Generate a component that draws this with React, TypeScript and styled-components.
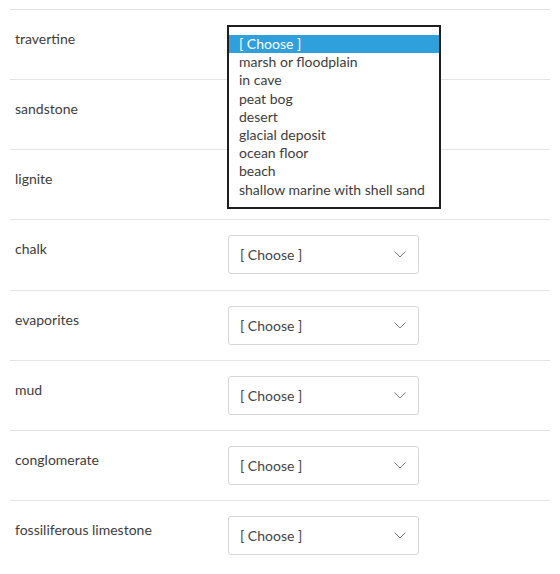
import React from "react";
import styled, { createGlobalStyle } from "styled-components";

const Global = createGlobalStyle`
  html, body { margin: 0; padding: 0; background: #fff; }
  body { font-family: Lato, "Open Sans", sans-serif; color: #3d3d3d; }
`;

const Page = styled.div`
  padding: 9px 10px 0 10px;
  width: 540px;
`;

const Row = styled.div`
  position: relative;
  box-sizing: border-box;
  height: 70.15px;
  border-top: 1px solid #e4e4e4;
  display: flex;
  align-items: flex-start;
`;

const Label = styled.div`
  width: 213px;
  padding: 18px 0 0 5px;
  font-size: 14px;
  line-height: 21px;
`;

const SelectBox = styled.div`
  margin-top: 15px;
  box-sizing: border-box;
  width: 191px;
  height: 39px;
  border: 1px solid #d6d6d6;
  border-radius: 3px;
  display: flex;
  align-items: center;
  justify-content: space-between;
  padding: 0 12px 0 11px;
  font-size: 14px;
  color: #444;
`;

const Chevron = () => (
  <svg width="12" height="7" viewBox="0 0 12 7">
    <polyline points="0.5,0.5 6,6 11.5,0.5" fill="none" stroke="#7a7a7a" strokeWidth="1" />
  </svg>
);

const OptionList = styled.ul`
  position: absolute;
  left: 217px;
  top: 15px;
  margin: 0;
  list-style: none;
  box-sizing: border-box;
  width: 214px;
  padding: 8px 0 8px 0;
  border: 2px solid #1e1e1e;
  background: #fff;
  z-index: 2;
`;

const Option = styled.li<{ $active?: boolean }>`
  height: 18.2px;
  line-height: 18px;
  padding-left: 10px;
  font-size: 14px;
  color: ${(p) => (p.$active ? "#fff" : "#3d3d3d")};
  background: ${(p) => (p.$active ? "#2fa0dc" : "transparent")};
  white-space: nowrap;
`;

const rocks = [
  "travertine",
  "sandstone",
  "lignite",
  "chalk",
  "evaporites",
  "mud",
  "conglomerate",
  "fossiliferous limestone",
];

const options = [
  "[ Choose ]",
  "marsh or floodplain",
  "in cave",
  "peat bog",
  "desert",
  "glacial deposit",
  "ocean floor",
  "beach",
  "shallow marine with shell sand",
];

export default function App() {
  return (
    <>
      <Global />
      <Page>
        {rocks.map((rock, i) => (
          <Row key={rock}>
            <Label>{rock}</Label>
            {i >= 3 && (
              <SelectBox>
                <span>[ Choose ]</span>
                <Chevron />
              </SelectBox>
            )}
            {i === 0 && (
              <OptionList>
                {options.map((o, j) => (
                  <Option key={o} $active={j === 0}>
                    {o}
                  </Option>
                ))}
              </OptionList>
            )}
          </Row>
        ))}
      </Page>
    </>
  );
}
